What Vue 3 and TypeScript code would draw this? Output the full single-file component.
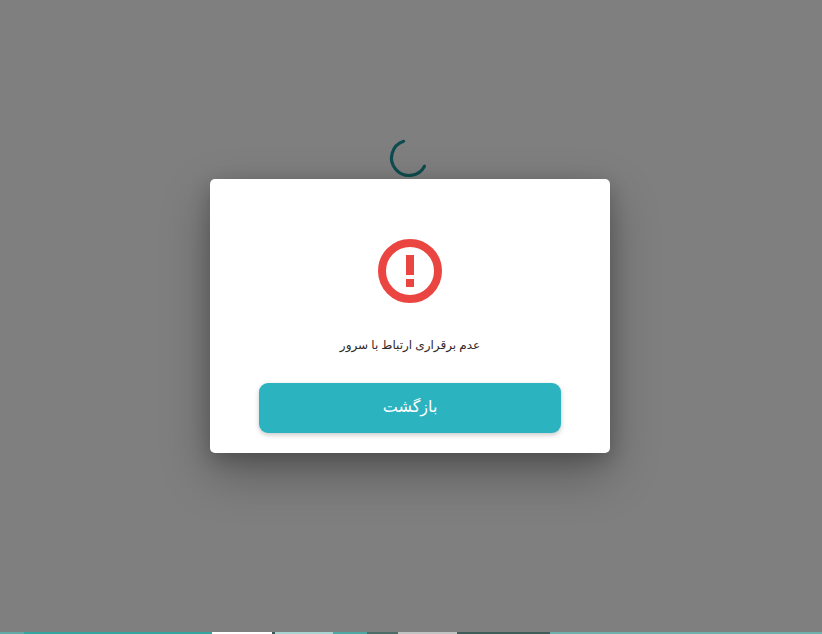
<script setup lang="ts">
const message = 'عدم برقراری ارتباط با سرور'
const action = 'بازگشت'
const strip = [
  { w: 24, c: '#62aaa8' },
  { w: 188, c: '#35a5a0' },
  { w: 60, c: '#ffffff' },
  { w: 3, c: '#3a5a58' },
  { w: 58, c: '#a8d4d2' },
  { w: 34, c: '#4fa8a4' },
  { w: 31, c: '#4d6d68' },
  { w: 59, c: '#c0c4c2' },
  { w: 93, c: '#3f5e5a' },
  { w: 272, c: '#6fb0ac' },
]
</script>

<template>
  <main class="page" dir="rtl">
    <svg class="spinner" width="44" height="44" viewBox="0 0 44 44" aria-hidden="true">
      <path class="arc" d="M16.6 5.35 A17.5 17.5 0 1 0 37.5 30.2" />
    </svg>
    <div class="strip" dir="ltr">
      <span v-for="(s, i) in strip" :key="i" :style="{ width: s.w + 'px', background: s.c }"></span>
    </div>
    <div class="overlay">
      <section class="modal">
        <svg class="alert" width="64" height="64" viewBox="0 0 64 64" aria-hidden="true">
          <circle cx="32" cy="32" r="28" class="ring" />
          <rect x="28" y="16" width="8" height="20" class="mark" />
          <rect x="28" y="40" width="8" height="8" class="mark" />
        </svg>
        <p class="message">{{ message }}</p>
        <button class="back" type="button"><span class="back-label">{{ action }}</span></button>
      </section>
    </div>
  </main>
</template>

<style>
html, body { margin: 0; padding: 0; background: #fff; }
</style>

<style scoped>
.page {
  position: relative;
  width: 822px;
  height: 634px;
  overflow: hidden;
  display: flex;
  flex-direction: column;
  align-items: center;
  font-family: "Noto Sans", "Open Sans", "DejaVu Sans", sans-serif;
}
.spinner {
  margin-top: 136px;
  margin-right: 4px;
  flex: none;
}
.arc {
  fill: none;
  stroke: #1f98a0;
  stroke-width: 3.2;
  stroke-linecap: round;
}
.strip {
  margin-top: auto;
  display: flex;
  width: 100%;
  height: 2px;
  flex: none;
}
.overlay {
  position: absolute;
  inset: 0 0 2px 0;
  background: rgba(0, 0, 0, 0.5);
  display: flex;
  justify-content: center;
  align-items: flex-start;
  padding: 179px 2px 0 0;
  box-sizing: border-box;
}
.modal {
  width: 400px;
  height: 274px;
  box-sizing: border-box;
  background: #fff;
  border-radius: 5px;
  box-shadow: 0 20px 50px rgba(0, 0, 0, 0.3), 0 6px 20px rgba(0, 0, 0, 0.2);
  display: flex;
  flex-direction: column;
  align-items: center;
  padding-top: 60px;
}
.alert { flex: none; display: block; }
.ring { fill: none; stroke: #ea4540; stroke-width: 8; }
.mark { fill: #ea4540; }
.message {
  margin: 33px 0 0;
  font-size: 12px;
  line-height: 18px;
  color: #2f2a2a;
}
.back {
  margin-top: 29px;
  width: 302px;
  height: 50px;
  padding: 0 0 4px;
  border: 0;
  border-radius: 9px;
  background: #2bb3bf;
  color: #fff;
  font: inherit;
  font-size: 16px;
  box-shadow: 0 2px 5px rgba(0, 0, 0, 0.22);
}
.back-label { display: block; }
</style>
